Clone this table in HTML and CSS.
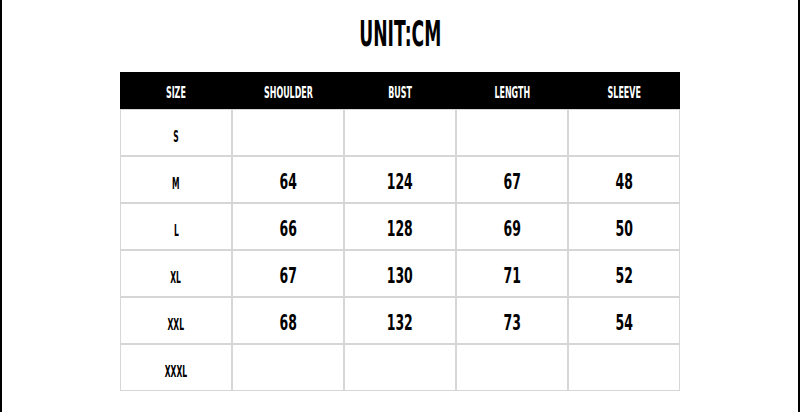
FILE: index.html
```html
<!DOCTYPE html>
<html>
<head>
<meta charset="utf-8">
<link rel="stylesheet" href="styles.css">
</head>
<body>
<div class="frame">
  <h1 class="title"><span class="sq">UNIT:CM</span></h1>
  <div class="chart">
    <div class="head">
      <div class="hc"><span class="sq">SIZE</span></div>
      <div class="hc"><span class="sq">SHOULDER</span></div>
      <div class="hc"><span class="sq">BUST</span></div>
      <div class="hc"><span class="sq">LENGTH</span></div>
      <div class="hc"><span class="sq">SLEEVE</span></div>
    </div>
    <div class="grid">
      <div class="c lab"><span class="sq">S</span></div><div class="c"></div><div class="c"></div><div class="c"></div><div class="c"></div>
      <div class="c lab"><span class="sq">M</span></div><div class="c num"><span class="sq">64</span></div><div class="c num"><span class="sq">124</span></div><div class="c num"><span class="sq">67</span></div><div class="c num"><span class="sq">48</span></div>
      <div class="c lab"><span class="sq">L</span></div><div class="c num"><span class="sq">66</span></div><div class="c num"><span class="sq">128</span></div><div class="c num"><span class="sq">69</span></div><div class="c num"><span class="sq">50</span></div>
      <div class="c lab"><span class="sq">XL</span></div><div class="c num"><span class="sq">67</span></div><div class="c num"><span class="sq">130</span></div><div class="c num"><span class="sq">71</span></div><div class="c num"><span class="sq">52</span></div>
      <div class="c lab"><span class="sq">XXL</span></div><div class="c num"><span class="sq">68</span></div><div class="c num"><span class="sq">132</span></div><div class="c num"><span class="sq">73</span></div><div class="c num"><span class="sq">54</span></div>
      <div class="c lab"><span class="sq">XXXL</span></div><div class="c"></div><div class="c"></div><div class="c"></div><div class="c"></div>
    </div>
  </div>
</div>
</body>
</html>
```
FILE: styles.css
```css
html, body {
  margin: 0;
  padding: 0;
  background: #fff;
}
body {
  font-family: "DejaVu Sans Condensed", "Liberation Sans", sans-serif;
  font-weight: bold;
  color: #000;
}
.frame {
  width: 800px;
  height: 412px;
  box-sizing: border-box;
  border-left: 2px solid #000;
  border-right: 2px solid #000;
  overflow: hidden;
}
.sq {
  display: inline-block;
  white-space: nowrap;
}
.title {
  margin: 0;
  height: 72px;
  font-size: 36px;
  line-height: 1;
  font-weight: bold;
  text-align: center;
  padding-top: 16px;
  box-sizing: border-box;
}
.title .sq {
  transform: scaleX(0.53);
}
.chart {
  width: 560px;
  margin: 0 auto;
}
.head {
  display: grid;
  grid-template-columns: repeat(5, 1fr);
  column-gap: 2px;
  padding: 0 1px;
  height: 37px;
  background: #000;
  color: #fff;
  font-size: 15px;
}
.hc {
  display: flex;
  align-items: center;
  justify-content: center;
  padding-top: 5px;
}
.hc .sq {
  transform: scaleX(0.59);
}
.grid {
  display: grid;
  grid-template-columns: repeat(5, 1fr);
  grid-auto-rows: 45px;
  gap: 2px;
  padding: 1px;
  background: #d6d6d6;
}
.c {
  background: #fff;
  display: flex;
  align-items: center;
  justify-content: center;
  padding-top: 4px;
  box-sizing: border-box;
}
.lab {
  font-size: 15px;
  padding-top: 9px;
}
.lab .sq {
  transform: scaleX(0.56);
}
.num {
  font-size: 21px;
  font-weight: 600;
}
.num .sq {
  transform: scaleX(0.66);
}
```
